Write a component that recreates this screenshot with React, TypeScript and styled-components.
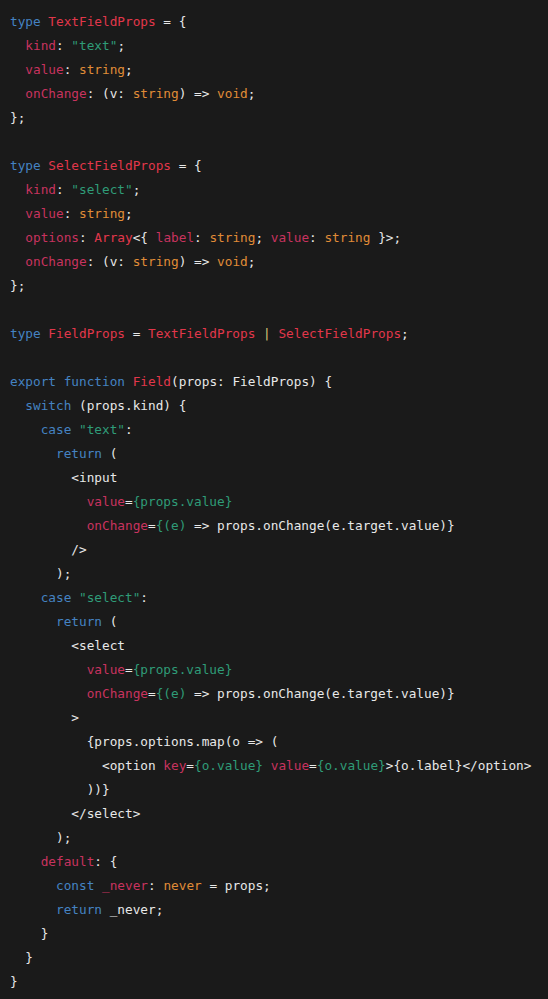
import styled, { createGlobalStyle } from 'styled-components';

const GlobalStyle = createGlobalStyle`
  html, body {
    margin: 0;
    padding: 0;
    background: #1a1a1a;
  }
`;

type Kind = 'plain' | 'kw' | 'type' | 'prop' | 'str' | 'prim' | 'pipe';

const colors: Record<Kind, string> = {
  plain: '#e8e8e8',
  kw: '#4583c2',
  type: '#e2374b',
  prop: '#c8335f',
  str: '#2f9c78',
  prim: '#e08c37',
  pipe: '#d8c97c',
};

const CodeBlock = styled.pre`
  margin: 0;
  padding: 10px 10px 6px 10px;
  background: #1a1a1a;
  font-family: 'DejaVu Sans Mono', 'Liberation Mono', monospace;
  font-size: 12.74px;
  line-height: 24px;
  color: #e8e8e8;
  white-space: pre;
  min-height: 999px;
  box-sizing: border-box;
`;

const Line = styled.div`
  height: 24px;
`;

const Tok = styled.span<{ $kind: Kind }>`
  color: ${(props) => colors[props.$kind]};
`;

// [kind, text] pairs; a bare string is plain text
type Piece = string | [Kind, string];

const lines: Piece[][] = [
  [['kw', 'type'], ' ', ['type', 'TextFieldProps'], ' = {'],
  ['  ', ['prop', 'kind'], ': ', ['str', '"text"'], ';'],
  ['  ', ['prop', 'value'], ': ', ['prim', 'string'], ';'],
  ['  ', ['prop', 'onChange'], ': (v: ', ['prim', 'string'], ') => ', ['prim', 'void'], ';'],
  ['};'],
  [],
  [['kw', 'type'], ' ', ['type', 'SelectFieldProps'], ' = {'],
  ['  ', ['prop', 'kind'], ': ', ['str', '"select"'], ';'],
  ['  ', ['prop', 'value'], ': ', ['prim', 'string'], ';'],
  ['  ', ['prop', 'options'], ': ', ['type', 'Array'], '<{ ', ['prop', 'label'], ': ', ['prim', 'string'], '; ', ['prop', 'value'], ': ', ['prim', 'string'], ' }>;'],
  ['  ', ['prop', 'onChange'], ': (v: ', ['prim', 'string'], ') => ', ['prim', 'void'], ';'],
  ['};'],
  [],
  [['kw', 'type'], ' ', ['type', 'FieldProps'], ' = ', ['type', 'TextFieldProps'], ' ', ['pipe', '|'], ' ', ['type', 'SelectFieldProps'], ';'],
  [],
  [['kw', 'export'], ' ', ['kw', 'function'], ' ', ['type', 'Field'], '(props: FieldProps) {'],
  ['  ', ['kw', 'switch'], ' (props.kind) {'],
  ['    ', ['kw', 'case'], ' ', ['str', '"text"'], ':'],
  ['      ', ['kw', 'return'], ' ('],
  ['        <input'],
  ['          ', ['prop', 'value'], '=', ['str', '{props.value}']],
  ['          ', ['prop', 'onChange'], '=', ['str', '{(e)'], ' => props.onChange(e.target.value)}'],
  ['        />'],
  ['      );'],
  ['    ', ['kw', 'case'], ' ', ['str', '"select"'], ':'],
  ['      ', ['kw', 'return'], ' ('],
  ['        <select'],
  ['          ', ['prop', 'value'], '=', ['str', '{props.value}']],
  ['          ', ['prop', 'onChange'], '=', ['str', '{(e)'], ' => props.onChange(e.target.value)}'],
  ['        >'],
  ['          {props.options.map(o => ('],
  ['            <option ', ['prop', 'key'], '=', ['str', '{o.value}'], ' ', ['prop', 'value'], '=', ['str', '{o.value}'], '>{o.label}</option>'],
  ['          ))}'],
  ['        </select>'],
  ['      );'],
  ['    ', ['prop', 'default'], ': {'],
  ['      ', ['kw', 'const'], ' ', ['prop', '_never'], ': ', ['prim', 'never'], ' = props;'],
  ['      ', ['kw', 'return'], ' _never;'],
  ['    }'],
  ['  }'],
  ['}'],
];

const App = () => {
  return (
    <>
      <GlobalStyle />
      <CodeBlock>
        {lines.map((pieces, i) => (
          <Line key={i}>
            {pieces.map((p, j) =>
              typeof p === 'string' ? (
                <Tok key={j} $kind="plain">{p}</Tok>
              ) : (
                <Tok key={j} $kind={p[0]}>{p[1]}</Tok>
              )
            )}
          </Line>
        ))}
      </CodeBlock>
    </>
  );
};

export default App;
